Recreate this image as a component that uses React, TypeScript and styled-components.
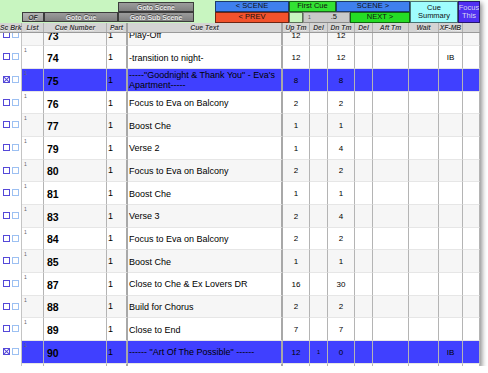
import React from "react";
import styled, { createGlobalStyle, css } from "styled-components";

const Global = createGlobalStyle`
  html, body { margin: 0; padding: 0; background: #ffffff; }
  body { font-family: "Liberation Sans", Arial, Helvetica, sans-serif; }
  * { box-sizing: border-box; }
`;

const COLS = "22px 22px 63px 21px 155px 27px 18px 27px 18px 36px 30px 24px 1fr";
const ROW_H = 22.67;

const Window = styled.div`
  width: 480px;
  height: 366px;
  overflow: hidden;
  background: #ffffff;
  box-shadow: 2px 3px 5px rgba(0, 0, 0, 0.45);
  display: flex;
  flex-direction: column;
`;

const Toolbar = styled.div`
  height: 23px;
  background: #c8f5c0;
  display: flex;
  flex: none;
`;

const LeftTools = styled.div`
  display: flex;
  align-items: flex-end;
  padding-left: 22px;
  padding-bottom: 1px;
`;

const GreyBtn = styled.div<{ $w: number }>`
  width: ${(p) => p.$w}px;
  height: 10px;
  background: linear-gradient(#9c9c9c, #808080);
  border: 1px solid #3c3c3c;
  color: #e6e6e6;
  font-size: 6.8px;
  font-weight: bold;
  text-shadow: 0 -1px 0 #4a4a4a;
  display: flex;
  align-items: center;
  justify-content: center;
  white-space: nowrap;
`;

const OfBtn = styled(GreyBtn)`
  background: linear-gradient(#b4b4b4, #9a9a9a);
  color: #333333;
  font-style: italic;
  text-shadow: 0 1px 0 #cfcfcf;
`;

const SceneStack = styled.div`
  display: flex;
  flex-direction: column;
  padding-top: 3px;
`;

const NavGrid = styled.div`
  margin-left: 21px;
  padding-top: 1px;
  flex: 1;
  display: grid;
  grid-template-columns: 74px 14px 33px 14px 60px 48px 1fr;
  grid-template-rows: 11px 11px;
`;

const Nav = styled.div<{ $bg: string; $fg?: string; $col: string; $row: string }>`
  grid-column: ${(p) => p.$col};
  grid-row: ${(p) => p.$row};
  background: ${(p) => p.$bg};
  color: ${(p) => p.$fg || "#111111"};
  border: 1px solid rgba(0, 0, 0, 0.55);
  font-size: 7.5px;
  line-height: 8.5px;
  display: flex;
  align-items: center;
  justify-content: center;
  text-align: center;
  white-space: nowrap;
  overflow: hidden;
`;

const StepBox = styled(Nav)`
  justify-content: space-between;
  padding: 0 12px 0 4px;
  background: #c9c9c9;
  border-color: #8a8a8a;
`;

const Tiny = styled.span`
  font-size: 5px;
  color: #555;
`;

const HeaderRow = styled.div`
  display: grid;
  grid-template-columns: ${COLS};
  height: 10px;
  background: #d4d4d4;
  border-bottom: 1px solid #9a9a9a;
  flex: none;
`;

const HeaderCell = styled.div<{ $thick?: boolean }>`
  border-right: ${(p) => (p.$thick ? "2px solid #a4a4a4" : "1px solid #b0b0b0")};
  font-size: 6.8px;
  font-weight: bold;
  font-style: italic;
  color: #3c3c3c;
  text-shadow: 0 1px 0 #f0f0f0;
  line-height: 9px;
  text-align: center;
  white-space: nowrap;
`;

const Body = styled.div`
  flex: 1;
  overflow: hidden;
`;

const Scroller = styled.div`
  margin-top: -9.3px;
`;

const Row = styled.div<{ $bg: string }>`
  display: grid;
  grid-template-columns: ${COLS};
  height: ${ROW_H}px;
  background: ${(p) => p.$bg};
`;

const cellBase = css`
  border-right: 1px solid #b4b4b4;
  border-bottom: 1px solid #e6e6e6;
  display: flex;
  align-items: center;
  overflow: hidden;
  color: #000;
`;

const BrkCell = styled.div`
  background: #ffffff;
  border-right: 1px solid #c4c4c4;
  display: flex;
  align-items: flex-start;
  padding: 7px 0 0 3px;
  gap: 1px;
`;

const Box = styled.div<{ $tone: "main" | "light"; $checked?: boolean }>`
  width: 7px;
  height: 7px;
  border: 1px solid ${(p) => (p.$tone === "main" ? "#5448d8" : "#9cc0f2")};
  background: #ffffff;
  margin-right: 1px;
  position: relative;
  ${(p) =>
    p.$checked &&
    css`
      &::before,
      &::after {
        content: "";
        position: absolute;
        left: -1px;
        top: 2px;
        width: 7px;
        height: 1px;
        background: #5448d8;
        transform: rotate(45deg);
      }
      &::after {
        transform: rotate(-45deg);
      }
    `}
`;

const ListCell = styled.div`
  ${cellBase}
  align-items: flex-start;
  padding: 1px 0 0 2px;
  font-size: 5px;
  color: #666;
`;

const NumCell = styled.div`
  ${cellBase}
  padding-left: 3px;
  padding-top: 2px;
  font-size: 10.5px;
  font-weight: bold;
`;

const PartCell = styled.div`
  ${cellBase}
  border-right: 2px solid #a8a8a8;
  padding-left: 1px;
  font-size: 9px;
`;

const TextCell = styled.div`
  ${cellBase}
  border-right: 2px solid #a8a8a8;
  padding: 1px 2px 0 1px;
  font-size: 9px;
  line-height: 10px;
`;

const TimeCell = styled.div<{ $small?: boolean }>`
  ${cellBase}
  justify-content: center;
  font-size: ${(p) => (p.$small ? "5.5px" : "8px")};
  padding-top: 1px;
`;

type Cue = {
  n: string;
  text: string;
  up: string;
  del?: string;
  dn: string;
  xf?: string;
  hl?: boolean;
};

const cues: Cue[] = [
  { n: "73", text: "Play-Off", up: "12", dn: "12" },
  { n: "74", text: "-transition to night-", up: "12", dn: "12", xf: "IB" },
  { n: "75", text: "-----\"Goodnight & Thank You\" - Eva's Apartment-----", up: "8", dn: "8", hl: true },
  { n: "76", text: "Focus to Eva on Balcony", up: "2", dn: "2" },
  { n: "77", text: "Boost Che", up: "1", dn: "1" },
  { n: "79", text: "Verse 2", up: "1", dn: "4" },
  { n: "80", text: "Focus to Eva on Balcony", up: "2", dn: "2" },
  { n: "81", text: "Boost Che", up: "1", dn: "1" },
  { n: "83", text: "Verse 3", up: "2", dn: "4" },
  { n: "84", text: "Focus to Eva on Balcony", up: "2", dn: "2" },
  { n: "85", text: "Boost Che", up: "1", dn: "1" },
  { n: "87", text: "Close to Che & Ex Lovers DR", up: "16", dn: "30" },
  { n: "88", text: "Build for Chorus", up: "2", dn: "2" },
  { n: "89", text: "Close to End", up: "7", dn: "7" },
  { n: "90", text: "------ \"Art Of The Possible\" ------", up: "12", del: "1", dn: "0", xf: "IB", hl: true },
];

const headers = ["Sc Brk", "List", "Cue Number", "Part", "Cue Text", "Up Tm", "Del", "Dn Tm", "Del", "Aft Tm", "Wait", "XF-MB", ""];

export default function App() {
  return (
    <>
      <Global />
      <Window>
        <Toolbar>
          <LeftTools>
            <OfBtn $w={22}>OF</OfBtn>
            <GreyBtn $w={74}>Goto Cue</GreyBtn>
            <SceneStack>
              <GreyBtn $w={76}>Goto Scene</GreyBtn>
              <GreyBtn $w={76}>Goto Sub Scene</GreyBtn>
            </SceneStack>
          </LeftTools>
          <NavGrid>
            <Nav $bg="#3f80ee" $col="1" $row="1">&lt; SCENE</Nav>
            <Nav $bg="#33e233" $col="2 / 4" $row="1">First Cue</Nav>
            <Nav $bg="#3f80ee" $col="4 / 6" $row="1">SCENE &gt;</Nav>
            <Nav $bg="#9ffdfd" $col="6" $row="1 / 3">Cue<br />Summary</Nav>
            <Nav $bg="#5030f2" $fg="#d8d8f0" $col="7" $row="1 / 3">Focus<br />This</Nav>
            <Nav $bg="#f2522c" $col="1" $row="2">&lt; PREV</Nav>
            <Nav $bg="#c8f5c0" $col="2" $row="2" />
            <StepBox $bg="#c9c9c9" $col="3 / 5" $row="2">
              <Tiny>1</Tiny>
              <span>.5</span>
            </StepBox>
            <Nav $bg="#25dc25" $col="5" $row="2">NEXT &gt;</Nav>
          </NavGrid>
        </Toolbar>
        <HeaderRow>
          {headers.map((h, i) => (
            <HeaderCell key={i} $thick={i === 3 || i === 4}>
              {h}
            </HeaderCell>
          ))}
        </HeaderRow>
        <Body>
          <Scroller>
            {cues.map((c, i) => (
              <Row key={c.n} $bg={c.hl ? "#4040ff" : i % 2 === 0 ? "#f6f6f6" : "#ffffff"}>
                <BrkCell>
                  <Box $tone="main" $checked={c.hl} />
                  <Box $tone="light" />
                </BrkCell>
                <ListCell>1</ListCell>
                <NumCell>{c.n}</NumCell>
                <PartCell>1</PartCell>
                <TextCell>{c.text}</TextCell>
                <TimeCell>{c.up}</TimeCell>
                <TimeCell $small>{c.del || ""}</TimeCell>
                <TimeCell>{c.dn}</TimeCell>
                <TimeCell />
                <TimeCell />
                <TimeCell />
                <TimeCell>{c.xf || ""}</TimeCell>
                <TimeCell />
              </Row>
            ))}
            <Row $bg="#ffffff">
              <BrkCell />
              <ListCell />
              <NumCell />
              <PartCell />
              <TextCell />
              <TimeCell />
              <TimeCell />
              <TimeCell />
              <TimeCell />
              <TimeCell />
              <TimeCell />
              <TimeCell />
              <TimeCell />
            </Row>
          </Scroller>
        </Body>
      </Window>
    </>
  );
}
